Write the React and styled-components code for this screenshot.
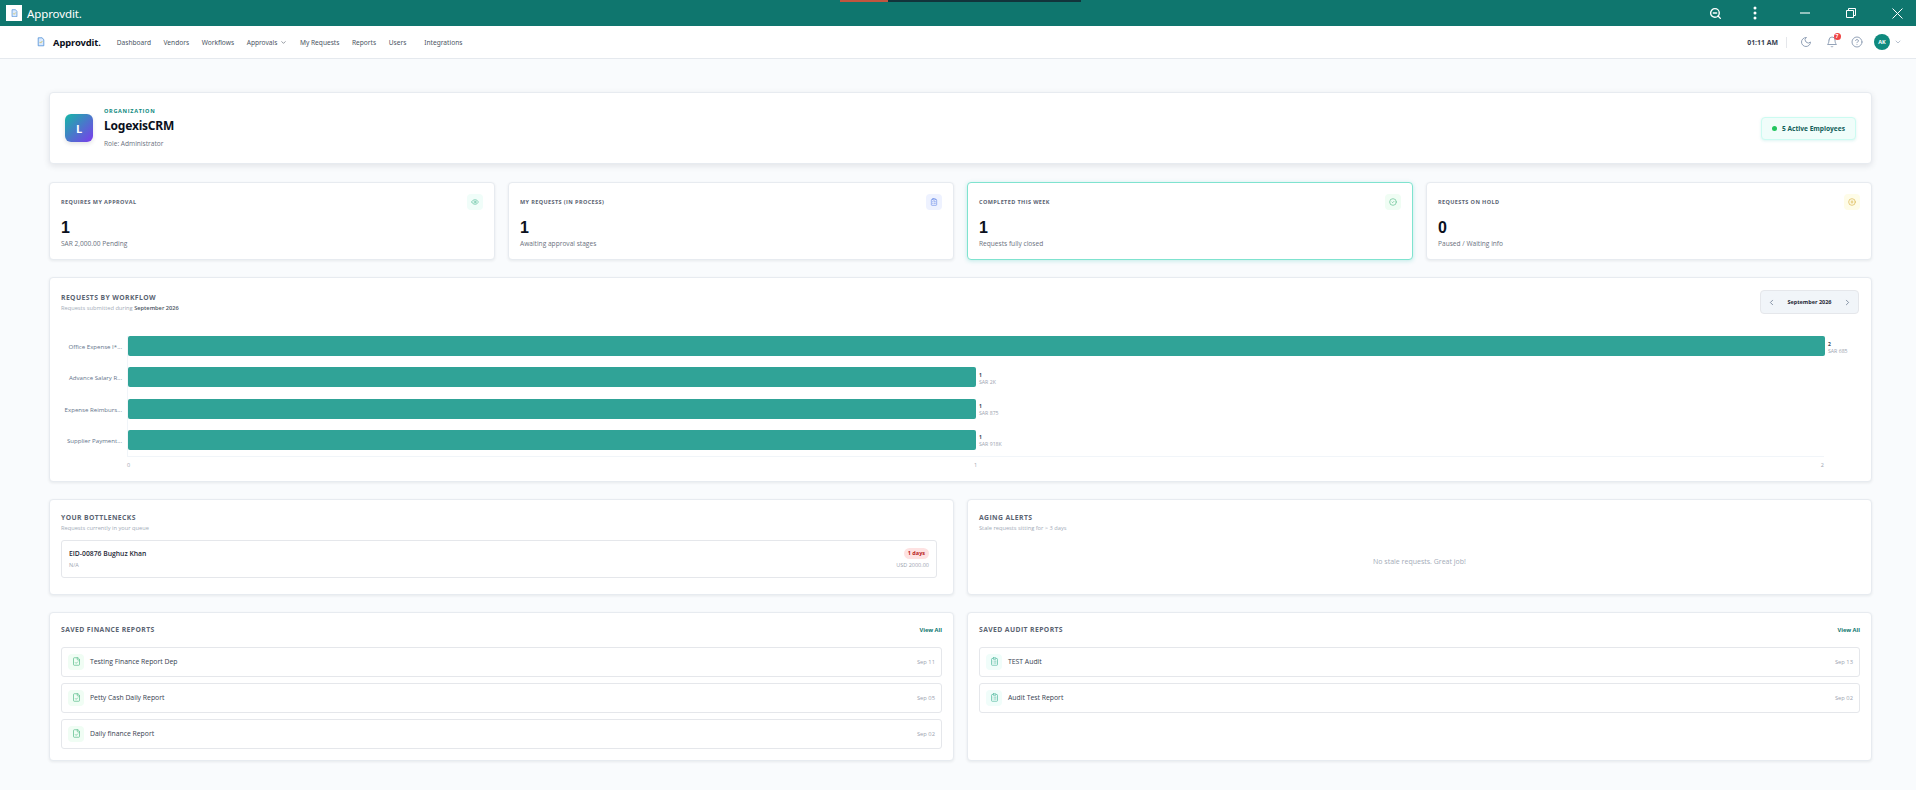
import React from 'react'
import styled, { createGlobalStyle } from 'styled-components'
import {
  LuZoomOut, LuEye, LuClipboardList, LuCircleCheck, LuCirclePause, LuChevronLeft, LuChevronRight,
  LuChevronDown, LuMoon, LuBell, LuFileCheck, LuCircleHelp,
} from 'react-icons/lu'

const GlobalStyle = createGlobalStyle`
  html, body { margin: 0; padding: 0; height: 100%; overflow: hidden; background: #f9fbfd; }
  body { font-family: "Open Sans", "Noto Sans", sans-serif; color: #0f172a; }
  * { box-sizing: border-box; }
`

const Shell = styled.div`
  width: 1916px;
  height: 790px;
  display: flex;
  flex-direction: column;
`

const TitleBar = styled.div`
  position: relative;
  height: 26px;
  flex: none;
  background: #0f766e;
  display: flex;
  align-items: center;
  padding: 0 11px 0 6px;
  color: #fff;
`

const LoadStrip = styled.div`
  position: absolute;
  top: 0;
  left: 840px;
  width: 241px;
  height: 2px;
  background: linear-gradient(90deg, #c2553f 0 48px, #12343b 48px);
`

const TitleLogo = styled.div`
  width: 16px;
  height: 16px;
  background: #fff;
  display: flex;
  align-items: center;
  justify-content: center;
`

const TitleName = styled.span`
  margin-left: 5px;
  font-family: "Noto Sans", sans-serif;
  font-size: 11.5px;
  letter-spacing: -0.1px;
`

const WindowTools = styled.div`
  margin-left: auto;
  display: flex;
  align-items: center;
`

const WindowTool = styled.div`
  width: 16px;
  height: 26px;
  margin-left: ${(p) => p.$gap ?? 0}px;
  display: flex;
  align-items: center;
  justify-content: center;
`

const NavBar = styled.header`
  height: 33px;
  flex: none;
  background: #fff;
  border-bottom: 1px solid #e5e9ee;
  display: flex;
  align-items: center;
  padding: 0 14px 0 37px;
`

const BrandName = styled.span`
  margin-left: 8px;
  margin-right: 16px;
  font-family: "Noto Sans", sans-serif;
  font-size: 9.4px;
  font-weight: 700;
  letter-spacing: -0.1px;
  color: #0b1020;
`

const NavLink = styled.a`
  display: flex;
  align-items: center;
  gap: 3px;
  font-family: "Noto Sans", sans-serif;
  font-size: 6.6px;
  color: #4b5563;
  margin-right: ${(p) => p.$gap ?? 12.6}px;
`

const NavRight = styled.div`
  margin-left: auto;
  display: flex;
  align-items: center;
  color: #94a3b8;
`

const Clock = styled.span`
  font-size: 6.9px;
  font-weight: 700;
  color: #374151;
  padding-right: 8px;
  margin-right: 13px;
  border-right: 1px solid #e5e7eb;
  line-height: 11px;
`

const NavIcon = styled.div`
  position: relative;
  width: 12px;
  height: 12px;
  display: flex;
  margin-right: ${(p) => p.$gap ?? 13.5}px;
`

const Badge = styled.span`
  position: absolute;
  top: -3px;
  right: -3px;
  width: 7px;
  height: 7px;
  border-radius: 50%;
  background: #ef4444;
  color: #fff;
  font-size: 5px;
  font-weight: 700;
  line-height: 7px;
  text-align: center;
`

const Avatar = styled.div`
  width: 16px;
  height: 16px;
  border-radius: 50%;
  background: #0f8a7e;
  color: #fff;
  font-size: 5.5px;
  font-weight: 700;
  display: flex;
  align-items: center;
  justify-content: center;
  margin-right: 4px;
`

const Main = styled.main`
  flex: 1;
  padding: 33px 44px 0 49px;
  display: flex;
  flex-direction: column;
  gap: 17px;
`

const Card = styled.section`
  background: #fff;
  border: 1px solid #e7ebf0;
  border-radius: 4px;
  box-shadow: 0 1px 3px rgba(15, 23, 42, 0.08);
`

const OrgCard = styled(Card)`
  height: 72px;
  padding: 0 15px;
  display: flex;
  align-items: center;
  box-shadow: 0 2px 6px rgba(15, 23, 42, 0.1);
  margin-bottom: 1px;
`

const OrgLogo = styled.div`
  width: 28px;
  height: 28px;
  border-radius: 6px;
  background: linear-gradient(135deg, #14b8a6, #7c3aed);
  color: #fff;
  font-size: 11px;
  font-weight: 700;
  display: flex;
  align-items: center;
  justify-content: center;
  box-shadow: 0 2px 4px rgba(15, 23, 42, 0.12);
  margin-right: 11px;
`

const OrgLabel = styled.div`
  font-size: 5.5px;
  font-weight: 700;
  letter-spacing: 0.7px;
  color: #0f8a7e;
  line-height: 8px;
`

const OrgName = styled.div`
  font-family: "Noto Sans", sans-serif;
  font-size: 12px;
  font-weight: 700;
  color: #0b1020;
  line-height: 18px;
  margin: 2px 0 4px;
  letter-spacing: -0.2px;
`

const OrgRole = styled.div`
  font-size: 6.6px;
  color: #6b7280;
  line-height: 10px;
`

const ActivePill = styled.div`
  margin-left: auto;
  width: 95px;
  height: 23px;
  padding-left: 10px;
  display: flex;
  align-items: center;
  gap: 5px;
  background: #f0fdfa;
  border: 1px solid #ccfbf1;
  border-radius: 4px;
  box-shadow: 0 1px 3px rgba(20, 184, 166, 0.15);
  font-size: 6.6px;
  font-weight: 700;
  color: #115e59;
`

const ActiveDot = styled.span`
  width: 5px;
  height: 5px;
  border-radius: 50%;
  background: #22c55e;
`

const StatGrid = styled.div`
  display: grid;
  grid-template-columns: repeat(4, 1fr);
  gap: 13px;
  height: 78px;
`

const StatCard = styled(Card)`
  padding: 11px 11px 0;
  border-color: ${(p) => (p.$active ? '#7fe3cf' : '#e7ebf0')};
  box-shadow: ${(p) => (p.$active ? '0 1px 4px rgba(20, 184, 166, 0.25)' : '0 1px 3px rgba(15, 23, 42, 0.08)')};
`

const StatHead = styled.div`
  display: flex;
  justify-content: space-between;
  align-items: center;
  height: 16px;
`

const StatTitle = styled.span`
  font-size: 5.5px;
  font-weight: 700;
  letter-spacing: 0.4px;
  color: #5b6472;
`

const StatIcon = styled.div`
  width: 16px;
  height: 16px;
  border-radius: 4px;
  background: ${(p) => p.$bg};
  color: ${(p) => p.$color};
  display: flex;
  align-items: center;
  justify-content: center;
`

const StatValue = styled.div`
  margin-top: 8px;
  font-family: "Liberation Sans", sans-serif;
  font-size: 16px;
  font-weight: 700;
  line-height: 20px;
  color: #0b1020;
`

const StatNote = styled.div`
  margin-top: 1px;
  font-size: 6.6px;
  line-height: 10px;
  color: #6b7280;
`

const ChartCard = styled(Card)`
  height: 205px;
  padding: 0 12px 0 11px;
  display: flex;
  flex-direction: column;
`

const ChartHead = styled.div`
  display: flex;
  justify-content: space-between;
  align-items: flex-start;
  height: 58px;
  padding-top: 13.5px;
`

const SectionTitle = styled.h3`
  margin: 0 0 1px;
  font-size: 6.8px;
  font-weight: 700;
  letter-spacing: 0.4px;
  line-height: 11px;
  color: #5b6472;
`

const SectionNote = styled.p`
  margin: 0;
  font-size: 5.7px;
  line-height: 9px;
  color: #a3abb8;

  b { color: #4b5563; font-weight: 600; }
`

const MonthPicker = styled.div`
  width: 99px;
  height: 24px;
  margin-top: -1.5px;
  padding: 0 6px;
  background: #f1f5f9;
  border: 1px solid #e5e7eb;
  border-radius: 4px;
  display: flex;
  align-items: center;
  justify-content: space-between;
  color: #64748b;
  font-size: 5.5px;
  font-weight: 700;

  span { color: #1f2937; }
`

const ChartRows = styled.div`
  margin-left: 66px;
  width: 1697px;
  border-left: 1px solid #f1f5f9;
  border-bottom: 1px solid #f1f5f9;
  padding: 0 0 6px;
  display: flex;
  flex-direction: column;
  gap: 11.3px;
`

const BarRow = styled.div`
  position: relative;
  height: 20px;
`

const BarLabel = styled.span`
  position: absolute;
  right: calc(100% + 6px);
  top: 50%;
  transform: translateY(-50%);
  font-size: 6.1px;
  color: #64748b;
  white-space: nowrap;
`

const Bar = styled.div`
  height: 20px;
  background: #30a397;
  border-radius: 2px;
`

const BarValue = styled.div`
  position: absolute;
  top: 4.5px;
  margin-left: 3px;
  font-size: 5px;
  line-height: 7px;
  font-weight: 700;
  color: #374151;
  white-space: nowrap;

  small { display: block; font-size: 5.2px; font-weight: 400; color: #9ca3af; }
`

const AxisRow = styled.div`
  margin-left: 66px;
  width: 1697px;
  height: 12px;
  display: flex;
  justify-content: space-between;
  align-items: flex-end;
  font-size: 5.5px;
  color: #9ca3af;
`

const TwoCols = styled.div`
  display: grid;
  grid-template-columns: 1fr 1fr;
  gap: 13px;
  height: ${(p) => p.$h}px;
`

const PanelCard = styled(Card)`
  padding: 11.5px 11px 0;
`

const QueueRow = styled.div`
  height: 38px;
  margin: 7.5px 5px 0 0;
  padding: 0 7px;
  border: 1px solid #e5e7eb;
  border-radius: 3px;
  display: flex;
  justify-content: space-between;
  align-items: center;
`

const QueueName = styled.div`
  font-size: 6.8px;
  font-weight: 600;
  line-height: 10px;
  color: #1f2937;
  margin-bottom: 2px;
`

const QueueSub = styled.div`
  font-size: 5.5px;
  line-height: 9px;
  color: #9ca3af;
  text-align: ${(p) => (p.$right ? 'right' : 'left')};
`

const DaysPill = styled.div`
  display: inline-block;
  padding: 0 4px;
  margin-bottom: 2px;
  background: #fee2e2;
  color: #b91c1c;
  border-radius: 6px;
  font-size: 5.5px;
  font-weight: 700;
  line-height: 11px;
`

const EmptyNote = styled.div`
  height: 57px;
  display: flex;
  align-items: center;
  justify-content: center;
  font-size: 7px;
  color: #a3abb8;
`

const ReportHead = styled.div`
  display: flex;
  justify-content: space-between;
  align-items: center;
  height: 11px;
`

const ViewAll = styled.a`
  font-size: 5.7px;
  font-weight: 700;
  color: #0f766e;
`

const ReportList = styled.div`
  margin-top: 11.5px;
  display: flex;
  flex-direction: column;
  gap: 6px;
`

const ReportRow = styled.div`
  height: 30px;
  padding: 0 6px;
  border: 1px solid #e5e7eb;
  border-radius: 3px;
  display: flex;
  align-items: center;
`

const ReportIcon = styled.div`
  width: 16px;
  height: 16px;
  border-radius: 4px;
  background: ${(p) => p.$bg};
  color: ${(p) => p.$color};
  display: flex;
  align-items: center;
  justify-content: center;
  margin-right: 6px;
`

const ReportName = styled.span`
  font-size: 6.85px;
  color: #374151;
  font-weight: 500;
`

const ReportDate = styled.span`
  margin-left: auto;
  font-size: 5.8px;
  color: #9ca3af;
`

const LogoMark = ({ size }) => (
  <svg width={size} height={size * 1.2} viewBox="0 0 10 12" fill="none">
    <path d="M1.5 1h5l2 2.5V11h-7z" fill="#dbeafe" stroke="#4f8fd6" strokeWidth="1" />
    <path d="M3.2 6.2l1.3 1.4L6.8 5" stroke="#c9b94f" strokeWidth="1" />
  </svg>
)

const stats = [
  { title: 'REQUIRES MY APPROVAL', value: 1, note: 'SAR 2,000.00 Pending', Icon: LuEye, bg: '#f0fdf9', color: '#5fbf9f' },
  { title: 'MY REQUESTS (IN PROCESS)', value: 1, note: 'Awaiting approval stages', Icon: LuClipboardList, bg: '#eef2ff', color: '#6f8fe8' },
  { title: 'COMPLETED THIS WEEK', value: 1, note: 'Requests fully closed', Icon: LuCircleCheck, bg: '#f0fdf4', color: '#5fbf8f', active: true },
  { title: 'REQUESTS ON HOLD', value: 0, note: 'Paused / Waiting info', Icon: LuCirclePause, bg: '#fefce8', color: '#d9b44a' },
]

const bars = [
  { label: 'Office Expense I*...', count: 2, amount: 'SAR 685', width: 1697 },
  { label: 'Advance Salary R...', count: 1, amount: 'SAR 2K', width: 848 },
  { label: 'Expense Reimburs...', count: 1, amount: 'SAR 875', width: 848 },
  { label: 'Supplier Payment...', count: 1, amount: 'SAR 918K', width: 848 },
]

const financeReports = [
  { name: 'Testing Finance Report Dep', date: 'Sep 11' },
  { name: 'Petty Cash Daily Report', date: 'Sep 05' },
  { name: 'Daily finance Report', date: 'Sep 02' },
]

const auditReports = [
  { name: 'TEST Audit', date: 'Sep 13' },
  { name: 'Audit Test Report', date: 'Sep 02' },
]

const navItems = [
  { name: 'Dashboard' }, { name: 'Vendors' }, { name: 'Workflows' },
  { name: 'Approvals', menu: true }, { name: 'My Requests' }, { name: 'Reports' },
  { name: 'Users', gap: 18 }, { name: 'Integrations' },
]

const ReportPanel = ({ title, reports, Icon, bg, color }) => (
  <PanelCard>
    <ReportHead>
      <SectionTitle>{title}</SectionTitle>
      <ViewAll>View All</ViewAll>
    </ReportHead>
    <ReportList>
      {reports.map((r) => (
        <ReportRow key={r.name}>
          <ReportIcon $bg={bg} $color={color}><Icon size={9} /></ReportIcon>
          <ReportName>{r.name}</ReportName>
          <ReportDate>{r.date}</ReportDate>
        </ReportRow>
      ))}
    </ReportList>
  </PanelCard>
)

const App = () => (
  <>
    <GlobalStyle />
    <Shell>
      <TitleBar>
        <LoadStrip />
        <TitleLogo><LogoMark size={7} /></TitleLogo>
        <TitleName>Approvdit.</TitleName>
        <WindowTools>
          <WindowTool><LuZoomOut size={13} strokeWidth={2.6} /></WindowTool>
          <WindowTool $gap={24}>
            <svg width="4" height="14" viewBox="0 0 4 14" fill="#fff">
              <circle cx="2" cy="2" r="1.5" /><circle cx="2" cy="7" r="1.5" /><circle cx="2" cy="12" r="1.5" />
            </svg>
          </WindowTool>
          <WindowTool $gap={34}>
            <svg width="10" height="10" viewBox="0 0 10 10" stroke="#fff" strokeWidth="1.1">
              <path d="M0 5h10" />
            </svg>
          </WindowTool>
          <WindowTool $gap={30}>
            <svg width="10" height="10" viewBox="0 0 10 10" fill="none" stroke="#fff" strokeWidth="1">
              <path d="M.5 2.5h7v7h-7z" /><path d="M2.5 2.5V.5h7v7h-2" />
            </svg>
          </WindowTool>
          <WindowTool $gap={30}>
            <svg width="11" height="11" viewBox="0 0 11 11" stroke="#fff" strokeWidth="1">
              <path d="M.5.5l10 10M10.5.5l-10 10" />
            </svg>
          </WindowTool>
        </WindowTools>
      </TitleBar>
      <NavBar>
        <LogoMark size={8} />
        <BrandName>Approvdit.</BrandName>
        {navItems.map((n) => (
          <NavLink key={n.name} $gap={n.gap}>
            {n.name}
            {n.menu && <LuChevronDown size={7} />}
          </NavLink>
        ))}
        <NavRight>
          <Clock>01:11 AM</Clock>
          <NavIcon><LuMoon size={12} /></NavIcon>
          <NavIcon><LuBell size={12} /><Badge>7</Badge></NavIcon>
          <NavIcon $gap={11}><LuCircleHelp size={12} /></NavIcon>
          <Avatar>AK</Avatar>
          <LuChevronDown size={8} />
        </NavRight>
      </NavBar>
      <Main>
        <OrgCard>
          <OrgLogo>L</OrgLogo>
          <div>
            <OrgLabel>ORGANIZATION</OrgLabel>
            <OrgName>LogexisCRM</OrgName>
            <OrgRole>Role: Administrator</OrgRole>
          </div>
          <ActivePill><ActiveDot />5 Active Employees</ActivePill>
        </OrgCard>
        <StatGrid>
          {stats.map((s) => (
            <StatCard key={s.title} $active={s.active}>
              <StatHead>
                <StatTitle>{s.title}</StatTitle>
                <StatIcon $bg={s.bg} $color={s.color}><s.Icon size={8} /></StatIcon>
              </StatHead>
              <StatValue>{s.value}</StatValue>
              <StatNote>{s.note}</StatNote>
            </StatCard>
          ))}
        </StatGrid>
        <ChartCard>
          <ChartHead>
            <div>
              <SectionTitle>REQUESTS BY WORKFLOW</SectionTitle>
              <SectionNote>Requests submitted during <b>September 2026</b></SectionNote>
            </div>
            <MonthPicker>
              <LuChevronLeft size={9} />
              <span>September 2026</span>
              <LuChevronRight size={9} />
            </MonthPicker>
          </ChartHead>
          <ChartRows>
            {bars.map((b) => (
              <BarRow key={b.label}>
                <BarLabel>{b.label}</BarLabel>
                <Bar style={{ width: b.width }} />
                <BarValue style={{ left: b.width }}>
                  {b.count}
                  <small>{b.amount}</small>
                </BarValue>
              </BarRow>
            ))}
          </ChartRows>
          <AxisRow>
            <span>0</span><span>1</span><span>2</span>
          </AxisRow>
        </ChartCard>
        <TwoCols $h={95.5}>
          <PanelCard>
            <SectionTitle>YOUR BOTTLENECKS</SectionTitle>
            <SectionNote>Requests currently in your queue</SectionNote>
            <QueueRow>
              <div>
                <QueueName>EID-00876 Bughuz Khan</QueueName>
                <QueueSub>N/A</QueueSub>
              </div>
              <div>
                <QueueSub $right><DaysPill>1 days</DaysPill></QueueSub>
                <QueueSub $right>USD 2000.00</QueueSub>
              </div>
            </QueueRow>
          </PanelCard>
          <PanelCard>
            <SectionTitle>AGING ALERTS</SectionTitle>
            <SectionNote>Stale requests sitting for &gt; 3 days</SectionNote>
            <EmptyNote>No stale requests. Great job!</EmptyNote>
          </PanelCard>
        </TwoCols>
        <TwoCols $h={149}>
          <ReportPanel title="SAVED FINANCE REPORTS" reports={financeReports} Icon={LuFileCheck} bg="#f0fdf4" color="#5fbf8f" />
          <ReportPanel title="SAVED AUDIT REPORTS" reports={auditReports} Icon={LuClipboardList} bg="#f0fdfa" color="#5fbfa5" />
        </TwoCols>
      </Main>
    </Shell>
  </>
)

export default App
